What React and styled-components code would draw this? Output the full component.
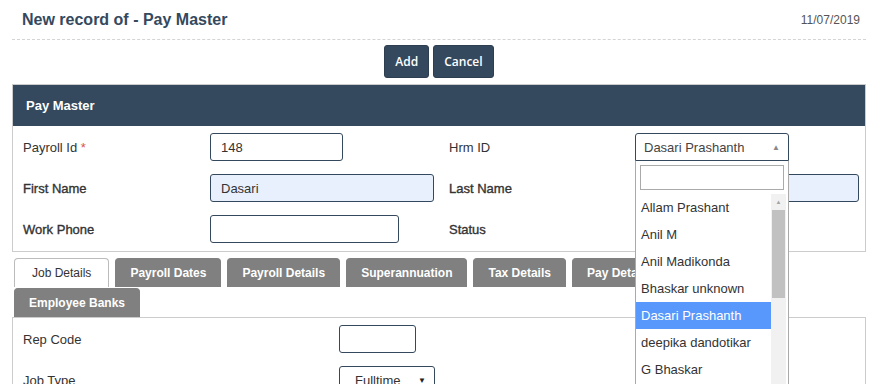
import React from "react";
import styled, { createGlobalStyle } from "styled-components";

const GlobalStyle = createGlobalStyle`
  body {
    margin: 0;
    background: #fff;
    font-family: "Liberation Sans", Arial, sans-serif;
    color: #333;
    overflow: hidden;
  }
`;

const employees = [
  "Allam Prashant",
  "Anil M",
  "Anil Madikonda",
  "Bhaskar unknown",
  "Dasari Prashanth",
  "deepika dandotikar",
  "G Bhaskar",
  "Gopi Krishna",
];

const tabsTop = ["Job Details", "Payroll Dates", "Payroll Details", "Superannuation", "Tax Details", "Pay Details"];

function App() {
  return (
    <Page>
      <GlobalStyle />
      <TitleBar>
        <Title>New record of - Pay Master</Title>
        <DateText>11/07/2019</DateText>
      </TitleBar>

      <Actions>
        <ActionButton>Add</ActionButton>
        <ActionButton>Cancel</ActionButton>
      </Actions>

      <Panel>
        <PanelHeader>Pay Master</PanelHeader>
        <FormGrid>
          <Label>
            Payroll Id <Required>*</Required>
          </Label>
          <Field>
            <TextBox w={133} defaultValue="148" />
          </Field>
          <Label>Hrm ID</Label>
          <Field>
            <SelectWrap>
              <ComboBox open>
                <span>Dasari Prashanth</span>
                <ComboArrow>▲</ComboArrow>
              </ComboBox>
              <Dropdown>
                <SearchBox />
                <ListArea>
                  <OptionList>
                    {employees.map((name) => (
                      <Option key={name} selected={name === "Dasari Prashanth"}>
                        {name}
                      </Option>
                    ))}
                  </OptionList>
                  <ScrollTrack>
                    <ScrollArrow>▲</ScrollArrow>
                    <ScrollThumb />
                  </ScrollTrack>
                </ListArea>
              </Dropdown>
            </SelectWrap>
          </Field>

          <Label bold>First Name</Label>
          <Field>
            <TextBox w={224} filled defaultValue="Dasari" />
          </Field>
          <Label bold>Last Name</Label>
          <Field>
            <TextBox w={224} filled defaultValue="" />
          </Field>

          <Label bold>Work Phone</Label>
          <Field>
            <TextBox w={189} defaultValue="" />
          </Field>
          <Label bold>Status</Label>
          <Field />
        </FormGrid>
      </Panel>

      <TabStrip>
        <TabRow>
          {tabsTop.map((t, i) => (
            <Tab key={t} active={i === 0}>
              {t}
            </Tab>
          ))}
        </TabRow>
        <TabRow>
          <Tab>Employee Banks</Tab>
        </TabRow>
      </TabStrip>

      <TabBody>
        <JobGrid>
          <Label>Rep Code</Label>
          <Field>
            <TextBox w={77} defaultValue="" />
          </Field>
          <Label>Job Type</Label>
          <Field>
            <PlainSelect>
              <span>Fulltime</span>
              <SelectCaret>▼</SelectCaret>
            </PlainSelect>
          </Field>
        </JobGrid>
      </TabBody>
    </Page>
  );
}

const Page = styled.div`
  padding: 0 12px;
`;

const TitleBar = styled.div`
  height: 39px;
  display: flex;
  align-items: center;
  justify-content: space-between;
  padding: 0 6px 0 10px;
  border-bottom: 1px dashed #d4d4d4;
`;

const Title = styled.h1`
  margin: 0;
  font-size: 16px;
  font-weight: bold;
  color: #34495e;
`;

const DateText = styled.span`
  font-size: 12px;
  color: #555;
`;

const Actions = styled.div`
  display: flex;
  justify-content: center;
  gap: 4px;
  margin-top: 5px;
`;

const ActionButton = styled.button`
  height: 33px;
  padding: 0 10px;
  border: 1px solid #2c3e50;
  border-radius: 3px;
  background: #34495e;
  color: #fff;
  font-family: "Open Sans", sans-serif;
  font-size: 12px;
  font-weight: 600;
  cursor: pointer;
`;

const Panel = styled.section`
  margin-top: 6px;
  border: 1px solid #ccc;
`;

const PanelHeader = styled.div`
  height: 41px;
  display: flex;
  align-items: center;
  padding-left: 13px;
  background: #34495e;
  color: #fff;
  font-size: 13px;
  font-weight: bold;
`;

const FormGrid = styled.div`
  display: grid;
  grid-template-columns: 187px 239px 186px 1fr;
  grid-auto-rows: 28px;
  row-gap: 13px;
  padding: 7px 0 8px 10px;
  align-items: center;
`;

const Label = styled.div`
  font-size: 13px;
  color: #333;
  -webkit-text-stroke: ${(p) => (p.bold ? "0.35px #333" : "0")};
`;

const Required = styled.span`
  color: #d9534f;
`;

const Field = styled.div`
  height: 28px;
  display: flex;
  align-items: center;
`;

const TextBox = styled.input`
  box-sizing: border-box;
  width: ${(p) => p.w}px;
  height: 28px;
  padding: 0 10px;
  border: 1px solid #34495e;
  border-radius: 3px;
  background: ${(p) => (p.filled ? "#e8f0fe" : "#fff")};
  font-family: "Liberation Sans", Arial, sans-serif;
  font-size: 13px;
  color: #333;
  outline: none;
`;

const SelectWrap = styled.div`
  position: relative;
  width: 154px;
  height: 28px;
`;

const ComboBox = styled.div`
  box-sizing: border-box;
  height: 28px;
  display: flex;
  align-items: center;
  justify-content: space-between;
  padding: 0 8px;
  border: 1px solid #34495e;
  border-radius: ${(p) => (p.open ? "3px 3px 0 0" : "3px")};
  font-size: 13px;
  color: #444;
  background: #fff;
`;

const ComboArrow = styled.span`
  font-size: 8px;
  color: #888;
`;

const Dropdown = styled.div`
  position: absolute;
  top: 28px;
  left: 0;
  width: 154px;
  box-sizing: border-box;
  border: 1px solid #aaa;
  border-top: none;
  background: #fff;
  z-index: 10;
`;

const SearchBox = styled.input`
  display: block;
  box-sizing: border-box;
  width: 144px;
  height: 25px;
  margin: 4px;
  border: 1px solid #aaa;
  outline: none;
`;

const ListArea = styled.div`
  display: flex;
  height: 200px;
  overflow: hidden;
`;

const OptionList = styled.ul`
  flex: 1;
  margin: 0;
  padding: 0;
  list-style: none;
`;

const Option = styled.li`
  height: 27px;
  display: flex;
  align-items: center;
  padding-left: 5px;
  font-size: 13px;
  color: ${(p) => (p.selected ? "#fff" : "#333")};
  background: ${(p) => (p.selected ? "#5897fb" : "#fff")};
`;

const ScrollTrack = styled.div`
  width: 15px;
  margin-right: 2px;
  background: #f1f1f1;
  display: flex;
  flex-direction: column;
  align-items: center;
`;

const ScrollArrow = styled.span`
  height: 16px;
  font-size: 6px;
  line-height: 16px;
  color: #a3a3a3;
`;

const ScrollThumb = styled.div`
  width: 13px;
  height: 88px;
  background: #c1c1c1;
`;

const TabStrip = styled.div`
  margin-top: 6px;
  padding-left: 2px;
  display: flex;
  flex-direction: column;
  gap: 1px;
`;

const TabRow = styled.div`
  display: flex;
  gap: 6px;
`;

const Tab = styled.div`
  box-sizing: border-box;
  height: 29px;
  display: flex;
  align-items: center;
  padding: 0 ${(p) => (p.active ? 17 : 14)}px;
  border: 1px solid ${(p) => (p.active ? "#bbb" : "#808080")};
  border-bottom: none;
  border-radius: 4px 4px 0 0;
  background: ${(p) => (p.active ? "#fff" : "#808080")};
  color: ${(p) => (p.active ? "#333" : "#fff")};
  font-size: 12px;
  font-weight: ${(p) => (p.active ? "normal" : "bold")};
`;

const TabBody = styled.div`
  border: 1px solid #ccc;
  border-bottom: none;
  height: 80px;
`;

const JobGrid = styled.div`
  display: grid;
  grid-template-columns: 316px 1fr;
  grid-auto-rows: 28px;
  row-gap: 13px;
  padding: 7px 0 0 10px;
  align-items: center;
`;

const PlainSelect = styled.div`
  box-sizing: border-box;
  width: 96px;
  height: 28px;
  display: flex;
  align-items: center;
  justify-content: space-between;
  padding: 0 8px 0 15px;
  border: 1px solid #34495e;
  border-radius: 3px;
  font-size: 13px;
  color: #333;
`;

const SelectCaret = styled.span`
  font-size: 8px;
  color: #222;
`;

export default App;
